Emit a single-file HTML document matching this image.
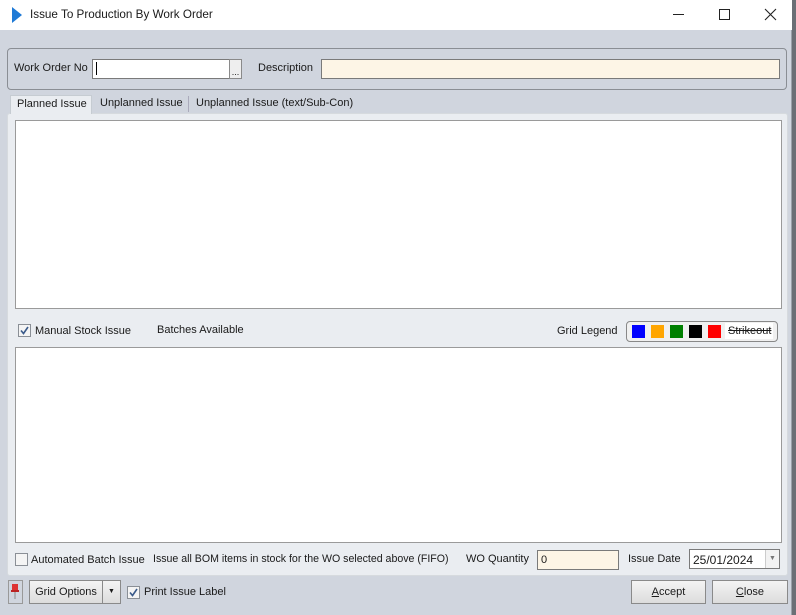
<!DOCTYPE html>
<html><head><style>
*{margin:0;padding:0;box-sizing:border-box}
body{width:796px;height:615px;overflow:hidden;background:#6b6f75;font-family:"Liberation Sans",sans-serif;font-size:11px;color:#1a1a1a;position:relative}
.a{position:absolute}
.win{left:0;top:0;width:792px;height:615px;background:#d0d5de;border-right:1px solid #9aa0a8}
.title{left:0;top:0;width:792px;height:30px;background:#fff}
.inp{background:#fff;border:1px solid #7a7a7a}
.btn{background:linear-gradient(#f4f4f4,#dcdcdc);border:1px solid #8a8a8a;text-align:center}
.cb{width:13px;height:13px;border:1px solid #8a8f96;background:#f4f4f4}
.sw{width:13px;height:13px;top:4px}
</style></head><body>
<div class="a win"></div>
<div class="a title"></div>
<svg class="a" style="left:11px;top:7px" width="12" height="16"><polygon points="1,0 11,8 1,16" fill="#1f7ad6"/></svg>
<div class="a" style="left:30px;top:8px;font-size:11.7px">Issue To Production By Work Order</div>
<div class="a" style="left:673px;top:14px;width:11px;border-top:1px solid #222"></div>
<div class="a" style="left:719px;top:9px;width:11px;height:11px;border:1px solid #222"></div>
<svg class="a" style="left:764px;top:8px" width="13" height="13"><path d="M1 1L12 12M12 1L1 12" stroke="#222" stroke-width="1.1"/></svg>

<div class="a" style="left:7px;top:48px;width:780px;height:42px;border:1px solid #8a8e94;border-radius:4px"></div>
<div class="a" style="left:14px;top:62px">Work Order No</div>
<div class="a inp" style="left:92px;top:59px;width:138px;height:20px"></div>
<div class="a" style="left:96px;top:62px;width:1px;height:13px;background:#000"></div>
<div class="a btn" style="left:229px;top:59px;width:13px;height:20px;background:#eee;font-size:9px;line-height:24px">...</div>
<div class="a" style="left:258px;top:62px">Description</div>
<div class="a inp" style="left:321px;top:59px;width:459px;height:20px;background:#fdf5e6"></div>

<div class="a" style="left:7px;top:113px;width:781px;height:463px;background:#eaedf1;border:1px solid #d6dade;border-radius:3px"></div>
<div class="a" style="left:10px;top:95px;width:82px;height:19px;background:#eaedf1;border:1px solid #c6ccd2;border-bottom:none"></div>
<div class="a" style="left:17px;top:98px">Planned Issue</div>
<div class="a" style="left:100px;top:97px">Unplanned Issue</div>
<div class="a" style="left:188px;top:96px;width:1px;height:16px;background:#aab"></div>
<div class="a" style="left:196px;top:97px">Unplanned Issue (text/Sub-Con)</div>

<div class="a" style="left:15px;top:120px;width:767px;height:189px;background:#fff;border:1px solid #9a9a9a"></div>

<div class="a cb" style="left:18px;top:324px"></div>
<svg class="a" style="left:19px;top:325px" width="11" height="11"><path d="M2 5.5L4.5 8.5L9 2" stroke="#3a5a8a" stroke-width="1.6" fill="none"/></svg>
<div class="a" style="left:35px;top:325px">Manual Stock Issue</div>
<div class="a" style="left:157px;top:324px">Batches Available</div>
<div class="a" style="left:557px;top:325px">Grid Legend</div>
<div class="a" style="left:626px;top:321px;width:152px;height:21px;border:1px solid #888;border-radius:4px;background:#f0f0f0"></div>
<div class="a sw" style="left:632px;top:325px;background:#0000ff"></div>
<div class="a sw" style="left:651px;top:325px;background:#ffa500"></div>
<div class="a sw" style="left:670px;top:325px;background:#008000"></div>
<div class="a sw" style="left:689px;top:325px;background:#000"></div>
<div class="a sw" style="left:708px;top:325px;background:#ff0000"></div>
<div class="a" style="left:725px;top:323px;width:48px;height:16px;background:#fff"></div>
<div class="a" style="left:728px;top:325px;font-size:11px;text-decoration:line-through">Strikeout</div>

<div class="a" style="left:15px;top:347px;width:767px;height:196px;background:#fff;border:1px solid #9a9a9a"></div>

<div class="a cb" style="left:15px;top:553px"></div>
<div class="a" style="left:31px;top:554px">Automated Batch Issue</div>
<div class="a" style="left:153px;top:553px;font-size:10.6px">Issue all BOM items in stock for the WO selected above (FIFO)</div>
<div class="a" style="left:466px;top:553px">WO Quantity</div>
<div class="a inp" style="left:537px;top:550px;width:82px;height:20px;background:#fdf5e6;padding:3px 3px">0</div>
<div class="a" style="left:628px;top:553px">Issue Date</div>
<div class="a inp" style="left:689px;top:549px;width:91px;height:20px;padding:3px 3px;font-size:12px">25/01/2024</div>
<div class="a" style="left:765px;top:550px;width:14px;height:18px;background:#f2f2f2;border-left:1px solid #ccc;font-size:7px;color:#777;text-align:center;line-height:18px">▼</div>

<div class="a" style="left:8px;top:580px;width:15px;height:24px;border:1px solid #999"></div>
<svg class="a" style="left:10px;top:583px" width="10" height="18"><rect x="2" y="1" width="6" height="7" fill="#d33"/><rect x="1" y="7" width="8" height="2" fill="#b22"/><line x1="5" y1="9" x2="5" y2="16" stroke="#888"/></svg>
<div class="a btn" style="left:29px;top:580px;width:74px;height:24px;line-height:22px">Grid Options</div>
<div class="a btn" style="left:102px;top:580px;width:19px;height:24px;font-size:7px;line-height:22px">▼</div>
<div class="a cb" style="left:127px;top:586px"></div>
<svg class="a" style="left:128px;top:587px" width="11" height="11"><path d="M2 5.5L4.5 8.5L9 2" stroke="#3a5a8a" stroke-width="1.6" fill="none"/></svg>
<div class="a" style="left:144px;top:586px">Print Issue Label</div>
<div class="a btn" style="left:631px;top:580px;width:75px;height:24px;line-height:22px"><u>A</u>ccept</div>
<div class="a btn" style="left:712px;top:580px;width:76px;height:24px;line-height:22px"><u>C</u>lose</div>
</body></html>
